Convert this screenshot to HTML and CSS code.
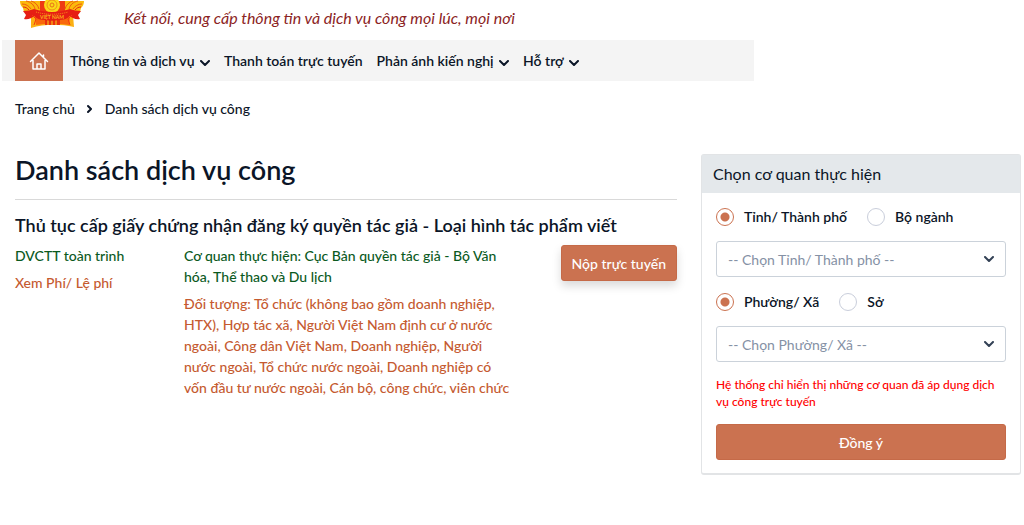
FILE: index.html
```
<!DOCTYPE html>
<html lang="vi">
<head>
	<meta charset="UTF-8">
	<meta name="viewport" content="width=device-width, initial-scale=1.0">
	<title>Danh sách dịch vụ công</title>
	<link rel="stylesheet" href="styles.css">
</head>
<body>

	<header class="header">
		<svg class="logo" viewBox="0 0 65 28" width="65" height="28">
			<path d="M0 1h64c0 3-1 5-3 7l-1 4H4L3 8C1 6 0 4 0 1z" fill="#fbb90c"/>
			<path d="M20 1h25v12H20z" fill="#ee3a14"/>
			<g fill="none" stroke="#ee5a10" stroke-width="1">
				<path d="M2 4c4 0 7 2 9 5M6 1c5 1 8 4 9 8M11 1c4 1 7 4 8 8M62 4c-4 0-7 2-9 5M58 1c-5 1-8 4-9 8M53 1c-4 1-7 4-8 8"/>
				<path d="M3 7c3 0 4 1 6 3M61 7c-3 0-4 1-6 3" stroke="#e61e14"/>
			</g>
			<circle cx="32" cy="5" r="8" fill="#fbd916"/>
			<circle cx="32" cy="5" r="5" fill="none" stroke="#f0901a"/>
			<circle cx="32" cy="5" r="2" fill="none" stroke="#e8701a"/>
			<path d="M11 15h42l1 12c-14-3-30-3-43 1z" fill="#fbb012"/>
			<path d="M15 17h35l-1 8c-11-2-22-2-33 0z" fill="#f9680c"/>
			<path d="M25 20h15v5H25z" fill="#e8300f"/>
			<path d="M28 20v5M32 20v5M36 20v5" stroke="#fbd51a"/>
			<path d="M3 11c4 0 8-1 11-2 12 4 24 4 36 0 3 1 7 2 11 2l-3 4 2 4c-4 1-8-1-10-3-3 3-7 4-11 4-5 1-9 1-14 0-4 0-8-1-11-4-2 2-6 4-10 3l2-4z" fill="#e61e14"/>
			<path d="M12 15l4 4-2 6M52 15l-4 4 2 6" fill="none" stroke="#f43a10"/>
			<path d="M16 12c10 3 22 3 32 0" fill="none" stroke="#f98a17" stroke-dasharray="1 1"/>
			<text x="32" y="19" text-anchor="middle" class="logo-text">VIỆT NAM</text>
		</svg>
		<p class="slogan">Kết nối, cung cấp thông tin và dịch vụ công mọi lúc, mọi nơi</p>
	</header>

	<nav class="menu">
		<a href="#" class="home" aria-label="Trang chủ">
			<svg viewBox="0 0 20 20" width="20" height="20">
				<path d="M1.500 10.500L10 2l8.500 8.500M4 9.500V18h12V9.500M8 18v-5h4v5M14.500 5.500V4" fill="none" stroke="#fff" stroke-width="1.500" stroke-linejoin="round" stroke-linecap="round"/>
			</svg>
		</a>
		<a href="#">Thông tin và dịch vụ
			<svg class="arrow" viewBox="0 0 10 6"><path d="M1 1l4 4 4-4"/></svg>
		</a>
		<a href="#">Thanh toán trực tuyến</a>
		<a href="#">Phản ánh kiến nghị
			<svg class="arrow" viewBox="0 0 10 6"><path d="M1 1l4 4 4-4"/></svg>
		</a>
		<a href="#">Hỗ trợ
			<svg class="arrow" viewBox="0 0 10 6"><path d="M1 1l4 4 4-4"/></svg>
		</a>
	</nav>

	<div class="breadcrumb">
		<a href="#">Trang chủ</a>
		<svg class="arrow arrow-right" viewBox="0 0 6 10"><path d="M1 2l3 3-3 3"/></svg>
		<a href="#">Danh sách dịch vụ công</a>
	</div>

	<div class="container">
		<main>
			<h1>Danh sách dịch vụ công</h1>
			<h2>Thủ tục cấp giấy chứng nhận đăng ký quyền tác giả - Loại hình tác phẩm viết</h2>
			<div class="service">
				<div class="info">
					<p class="green">DVCTT toàn trình</p>
					<a href="#" class="orange">Xem Phí/ Lệ phí</a>
				</div>
				<div class="info detail">
					<p class="green">Cơ quan thực hiện: Cục Bản quyền tác giả - Bộ Văn hóa, Thể thao và Du lịch</p>
					<p class="orange">Đối tượng: Tổ chức (không bao gồm doanh nghiệp, HTX), Hợp tác xã, Người Việt Nam định cư ở nước ngoài, Công dân Việt Nam, Doanh nghiệp, Người nước ngoài, Tổ chức nước ngoài, Doanh nghiệp có vốn đầu tư nước ngoài, Cán bộ, công chức, viên chức</p>
				</div>
				<button type="button" class="btn shadow">Nộp trực tuyến</button>
			</div>
		</main>

		<aside class="panel">
			<h3>Chọn cơ quan thực hiện</h3>
			<form action="">
				<div class="radios">
					<label for="tinh"><input type="radio" name="cap1" id="tinh" checked>Tỉnh/ Thành phố</label>
					<label for="bo"><input type="radio" name="cap1" id="bo">Bộ ngành</label>
				</div>
				<div class="select">
					<select name="chonTinh" id="chonTinh" aria-label="Chọn Tỉnh/ Thành phố">
						<option>-- Chọn Tỉnh/ Thành phố --</option>
					</select>
					<svg class="arrow" viewBox="0 0 10 6"><path d="M1 1l4 4 4-4"/></svg>
				</div>
				<div class="radios">
					<label for="phuong"><input type="radio" name="cap2" id="phuong" checked>Phường/ Xã</label>
					<label for="so"><input type="radio" name="cap2" id="so">Sở</label>
				</div>
				<div class="select">
					<select name="chonPhuong" id="chonPhuong" aria-label="Chọn Phường/ Xã">
						<option>-- Chọn Phường/ Xã --</option>
					</select>
					<svg class="arrow" viewBox="0 0 10 6"><path d="M1 1l4 4 4-4"/></svg>
				</div>
				<p class="note">Hệ thống chỉ hiển thị những cơ quan đã áp dụng dịch vụ công trực tuyến</p>
				<button type="submit" class="btn">Đồng ý</button>
			</form>
		</aside>
	</div>

</body>
</html>
```
FILE: styles.css
```
*{
	box-sizing: border-box;
}

body{
	margin: 0;
	font-family: "Lato", "Noto Sans", sans-serif;
	font-size: 14px;
	line-height: 21px;
	color: #0b1527;
	background: #fff;
}

h1, h2, h3, p{
	margin: 0;
	font-weight: 500;
}

a{
	color: inherit;
	text-decoration: none;
}

.header{
	height: 40px;
	padding-left: 20px;
	display: flex;
	align-items: flex-start;
	gap: 39px;
}

.logo{
	flex: none;
}

.logo-text{
	font-size: 5px;
	font-weight: 700;
	fill: #fbb51a;
}

.slogan{
	padding-top: 7px;
	font-size: 16px;
	font-weight: 400;
	font-style: italic;
	color: #8b2323;
}

.menu{
	width: 73.4%;
	height: 41px;
	margin-left: 2px;
	padding-left: 13px;
	display: flex;
	align-items: center;
	gap: 14px;
	background: #f4f4f4;
	font-weight: 600;
}

.menu a{
	white-space: nowrap;
}

.menu .arrow{
	margin-left: 2px;
}

.menu .home{
	width: 48px;
	height: 41px;
	margin-right: -7px;
	display: flex;
	align-items: center;
	justify-content: center;
	background: #cb7250;
}

.arrow{
	width: 10px;
	height: 6px;
	fill: none;
	stroke: #0b1527;
	stroke-width: 2;
	stroke-linecap: round;
	stroke-linejoin: round;
}

.arrow-right{
	width: 6px;
	height: 10px;
}

.breadcrumb{
	padding: 17px 15px;
	display: flex;
	align-items: center;
	gap: 12px;
	font-weight: 500;
}

.container{
	padding: 18px 3px 0 15px;
	display: grid;
	grid-template-columns: minmax(0, 1fr) 320px;
	align-items: start;
	gap: 24px;
}

h1{
	padding-bottom: 14px;
	border-bottom: 1px solid #d9d9d9;
	font-size: 27px;
	line-height: 31px;
	font-weight: 600;
}

h2{
	padding: 13px 0 8px;
	font-size: 18px;
	line-height: 24px;
	font-weight: 600;
}

.service{
	display: grid;
	grid-template-columns: 153px minmax(0, 1fr) auto;
	align-items: start;
	gap: 16px;
}

.info{
	display: flex;
	flex-flow: column;
	gap: 6px;
	font-weight: 500;
}

.detail{
	max-width: 326px;
}

.green{
	color: #0b5a1e;
}

.orange{
	color: #c55a30;
}

.btn{
	height: 36px;
	padding: 0 10px;
	border: 1px solid #c56a48;
	border-radius: 3px;
	background: #cb7250;
	color: #fff;
	font: inherit;
	font-weight: 500;
}

.shadow{
	box-shadow: 0 5px 10px rgba(0, 0, 0, 0.15);
}

.panel{
	border: 1px solid #e2e4e6;
	border-bottom-width: 2px;
	border-radius: 3px;
}

.panel h3{
	padding: 8px 11px 9px;
	background: #e4e8eb;
	font-size: 16px;
	font-weight: 400;
}

.panel form{
	padding: 13px 14px;
	display: flex;
	flex-flow: column;
	gap: 14px;
}

.radios{
	display: flex;
	gap: 20px;
	font-weight: 600;
}

.radios label{
	display: flex;
	align-items: center;
	gap: 10px;
}

.radios input{
	appearance: none;
	width: 18px;
	height: 18px;
	margin: 0;
	border: 1px solid #c9cedb;
	border-radius: 50%;
	background: #fff;
}

.radios input:checked{
	border-color: #cb7250;
	background: radial-gradient(circle, #cb7250 4px, #fff 5px);
}

.select{
	display: grid;
	align-items: center;
}

.select select, .select .arrow{
	grid-area: 1 / 1;
}

.select select{
	appearance: none;
	width: 100%;
	height: 36px;
	padding: 0 11px;
	border: 1px solid #cbd2da;
	border-radius: 3px;
	background: #fff;
	color: #8591a5;
	font: inherit;
}

.select .arrow{
	justify-self: end;
	margin-right: 12px;
	stroke: #334155;
	pointer-events: none;
}

.note{
	font-size: 12px;
	line-height: 17px;
	color: #f00;
}
```
